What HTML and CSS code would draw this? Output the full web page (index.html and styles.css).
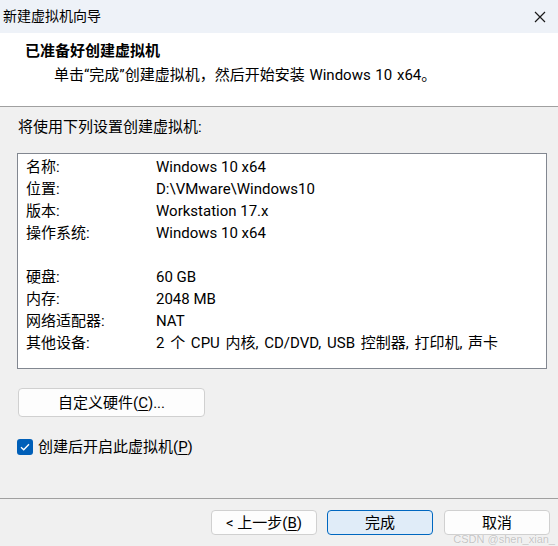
FILE: index.html
```html
<!DOCTYPE html>
<html lang="zh-CN">
<head>
<meta charset="utf-8">
<title>新建虚拟机向导</title>
<link rel="stylesheet" href="styles.css">
</head>
<body>
<div class="window">
  <div class="titlebar">
    <span class="title">新建虚拟机向导</span>
    <svg class="close" width="12" height="12" viewBox="0 0 12 12"><path d="M1 1L11 11M11 1L1 11" stroke="#1a1a1a" stroke-width="1.2" fill="none"/></svg>
  </div>
  <div class="header">
    <div class="h-title">已准备好创建虚拟机</div>
    <div class="h-sub">单击“完成”创建虚拟机，然后开始安装 Windows 10 x64。</div>
  </div>
  <div class="sep"></div>
  <div class="body">
    <div class="intro">将使用下列设置创建虚拟机:</div>
    <div class="summary">
      <div class="row"><span class="k">名称:</span><span class="v">Windows 10 x64</span></div>
      <div class="row"><span class="k">位置:</span><span class="v">D:\VMware\Windows10</span></div>
      <div class="row"><span class="k">版本:</span><span class="v">Workstation 17.x</span></div>
      <div class="row"><span class="k">操作系统:</span><span class="v">Windows 10 x64</span></div>
      <div class="row"></div>
      <div class="row"><span class="k">硬盘:</span><span class="v">60 GB</span></div>
      <div class="row"><span class="k">内存:</span><span class="v">2048 MB</span></div>
      <div class="row"><span class="k">网络适配器:</span><span class="v">NAT</span></div>
      <div class="row"><span class="k">其他设备:</span><span class="v list">2 个 CPU 内核, CD/DVD, USB 控制器, 打印机, 声卡</span></div>
    </div>
    <button class="btn custom">自定义硬件(<u>C</u>)...</button>
    <label class="check">
      <span class="box"><svg width="10" height="8" viewBox="0 0 10 8"><path d="M1 4.2L3.7 6.8L9 1.2" stroke="#fff" stroke-width="1.3" fill="none"/></svg></span>
      <span>创建后开启此虚拟机(<u>P</u>)</span>
    </label>
  </div>
  <div class="sep"></div>
  <div class="footer">
    <button class="btn fbtn">&lt; 上一步(<u>B</u>)</button>
    <button class="btn fbtn primary">完成</button>
    <button class="btn fbtn">取消</button>
  </div>
  <div class="watermark">CSDN @shen_xian_</div>
</div>
</body>
</html>
```
FILE: styles.css
```css
* { box-sizing: border-box; }
html, body { margin: 0; padding: 0; }
body {
  width: 558px;
  height: 546px;
  overflow: hidden;
  background: #f0f0f0;
  font-family: Roboto, "Noto Sans CJK SC", sans-serif;
  font-size: 15px;
  color: #000;
}
.window { position: relative; width: 558px; height: 546px; }
.titlebar {
  height: 33px;
  background: #eef2f8;
  display: flex;
  align-items: center;
  justify-content: space-between;
  padding: 0 12px 0 3px;
}
.title { font-size: 14px; line-height: 20px; margin-top: -2px; }
.header {
  background: #fff;
  height: 73px;
  padding: 8px 0 0 25px;
}
.h-title { font-weight: bold; font-size: 15px; line-height: 20px; }
.h-sub { padding-left: 29px; line-height: 20px; margin-top: 4px; word-spacing: 1px; }
.sep { height: 1px; background: #a0a0a0; }
.body { padding: 10px 0 0 17px; height: 391px; }
.intro { padding-left: 1px; line-height: 20px; }
.summary {
  margin-top: 16px;
  width: 530px;
  height: 216px;
  background: #fff;
  border: 1px solid #828790;
  padding: 2px 0 0 8px;
}
.row { display: flex; height: 22px; line-height: 22px; }
.k { width: 130px; }
.list { word-spacing: 2px; }
.btn {
  font-family: inherit;
  font-size: 15px;
  color: #000;
  background: #fdfdfd;
  border: 1px solid #d0d0d0;
  border-radius: 4px;
  padding: 0;
}
.custom { display: block; margin-top: 19px; margin-left: 1px; width: 187px; height: 29px; line-height: 26px; }
u { text-decoration-thickness: 1px; text-underline-offset: 2px; }
.check { display: flex; align-items: center; gap: 5px; margin-top: 20px; line-height: 20px; }
.box {
  width: 16px; height: 16px;
  background: #005fb8;
  border-radius: 3px;
  display: flex; align-items: center; justify-content: center;
}
.footer {
  display: flex;
  justify-content: flex-end;
  gap: 10px;
  padding: 11px 8px 0 0;
}
.fbtn { width: 106px; height: 25px; line-height: 22px; }
.footer .fbtn:last-child { margin-left: 1px; }
.primary { background: #e0ecf8; border-color: #0067c0; }
.watermark {
  position: absolute;
  right: 3px;
  bottom: 1px;
  font-family: "Liberation Sans", sans-serif;
  font-size: 11px;
  line-height: 12px;
  color: rgba(150,150,150,0.55);
  text-shadow: 0 0 1px #fff;
}
```
